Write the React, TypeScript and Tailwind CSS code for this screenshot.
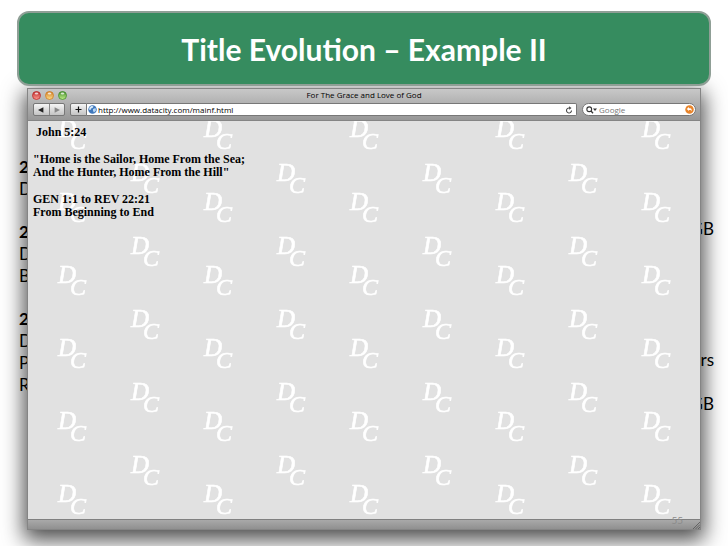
import React from "react";

const leftNotes = [
    ["2", "D"],
    ["2", "D", "B"],
    ["2", "D", "P", "R"],
];

const TrafficLight = ({ id, label, light, dark }: { id: string; label: string; light: string; dark: string }) => (
    <button type="button" aria-label={label} className="block size-[9px]">
        <svg viewBox="0 0 18 18" className="size-full">
            <defs>
                <linearGradient id={id} x1="0" y1="0" x2="0" y2="1">
                    <stop offset="0" stopColor={dark} />
                    <stop offset="1" stopColor={light} />
                </linearGradient>
            </defs>
            <circle cx="9" cy="9" r="8" fill={`url(#${id})`} stroke={dark} strokeWidth="1.6" />
            <ellipse cx="9" cy="5" rx="3.6" ry="2.2" fill="#fff" opacity="0.75" />
        </svg>
    </button>
);

const GlobeIcon = () => (
    <svg viewBox="0 0 18 18" className="size-[9px] shrink-0">
        <circle cx="9" cy="9" r="8.5" fill="#3f78bd" />
        <path d="M3 5 C5 2 9 1 11 3 L9 6 L6 7 L5 10 L2 9 Z" fill="#d8ebfa" />
        <path d="M10 8 L15 6 L16 11 L12 15 L10 12 Z" fill="#b7d6f2" />
    </svg>
);

const Toolbar = () => (
    <div className="mt-[2px] flex h-[13px] items-stretch pl-[5px] pr-1">
        <div className="flex w-8 rounded-[2px] border border-[#777] bg-linear-to-b from-[#f6f6f6] to-[#c3c3c3]">
            <button type="button" aria-label="Back" className="flex flex-1 items-center justify-center border-r border-[#888]">
                <svg viewBox="0 0 10 10" className="size-[6px]"><path d="M0 5 L9 0.5 V9.5 Z" fill="#222" /></svg>
            </button>
            <button type="button" aria-label="Forward" className="flex flex-1 items-center justify-center">
                <svg viewBox="0 0 10 10" className="size-[6px]"><path d="M10 5 L1 0.5 V9.5 Z" fill="#888" /></svg>
            </button>
        </div>

        <button type="button" aria-label="Add bookmark" className="ml-[5px] flex w-[17px] items-center justify-center rounded-l-[2px] border border-[#777] bg-linear-to-b from-[#f6f6f6] to-[#c3c3c3]">
            <svg viewBox="0 0 14 14" className="size-[7px]"><path d="M7 1 V13 M1 7 H13" stroke="#111" strokeWidth="2.4" /></svg>
        </button>
        <div className="flex min-w-0 flex-1 items-center gap-px rounded-r-[2px] border border-l-0 border-[#777] bg-white px-px">
            <GlobeIcon />
            <input aria-label="Address" defaultValue="http://www.datacity.com/mainf.html" className="h-full min-w-0 flex-1 text-[8px] leading-[10px] text-black outline-none" />
            <button type="button" aria-label="Reload" className="mr-[2px]">
                <svg viewBox="0 0 16 16" className="size-[8px]" fill="none" stroke="#444" strokeWidth="2.2">
                    <path d="M13 9 A5 5 0 1 1 9 4" />
                    <path d="M8 0.5 L13 4 L8.5 7.5 Z" fill="#444" stroke="none" />
                </svg>
            </button>
        </div>

        <div className="ml-[5px] flex w-[114px] items-center rounded-full border border-[#777] bg-white pl-[3px] pr-px">
            <svg viewBox="0 0 22 16" className="h-[8px] w-[11px] shrink-0">
                <circle cx="6.5" cy="6.5" r="4.8" fill="none" stroke="#333" strokeWidth="2.2" />
                <path d="M10 10 L14 14.5" stroke="#333" strokeWidth="2.6" />
                <path d="M14 5 H22 L18 10 Z" fill="#333" />
            </svg>
            <input aria-label="Search" placeholder="Google" className="ml-[2px] h-full min-w-0 flex-1 text-[8px] leading-[10px] outline-none placeholder:text-[#777]" />
            <button type="button" aria-label="Snap back">
                <svg viewBox="0 0 18 18" className="size-[9px]">
                    <circle cx="9" cy="9" r="8.5" fill="#e8842a" />
                    <path d="M3.5 8 L8 4 V6.5 H10 C13 6.5 14 9 13 13 C12.5 10.5 11.5 9.8 10 9.8 H8 V12 Z" fill="#fff" />
                </svg>
            </button>
        </div>
    </div>
);

// repeating DC monogram behind the page text
const Monograms = () => (
    <svg aria-hidden="true" className="absolute inset-0 size-full">
        <defs>
            <pattern id="monogram" y="34" width="146" height="73" patternUnits="userSpaceOnUse">
                <g fill="#fff" stroke="#fff" strokeWidth="0.6" fontFamily="'Liberation Serif', serif" fontStyle="italic" fontSize="25">
                    <text x="103" y="26">D</text>
                    <text x="115" y="38" fontSize="24">C</text>
                    <text x="30" y="55">D</text>
                    <text x="42" y="67" fontSize="24">C</text>
                </g>
            </pattern>
        </defs>
        <rect width="100%" height="100%" fill="url(#monogram)" />
    </svg>
);

const BrowserWindow = () => (
    <div className="absolute inset-x-[27px] bottom-4 top-[88px] flex flex-col border border-[#858585] bg-[#e1e1e1] font-['Open_Sans',sans-serif] shadow-[0_7px_20px_3px_rgba(0,0,0,0.7)]">
        <header className="h-8 shrink-0 border-b border-[#858585] bg-linear-to-b from-[#c8c8c8] to-[#979797]">
            <div className="grid h-3 grid-cols-[1fr_auto_1fr] items-center">
                <div className="flex gap-1 pl-1">
                    <TrafficLight id="close" label="Close" light="#ff9c91" dark="#b9282a" />
                    <TrafficLight id="minimise" label="Minimise" light="#ffe08a" dark="#cf7c25" />
                    <TrafficLight id="zoom" label="Zoom" light="#c3f08a" dark="#438c2b" />
                </div>
                <h2 className="text-[8px] leading-[10px] text-black">For The Grace and Love of God</h2>
            </div>
            <Toolbar />
        </header>

        <main className="relative min-h-0 flex-1">
            <Monograms />
            <div className="relative flex flex-col gap-[14px] pl-[5px] pt-[5px] font-['Liberation_Serif',serif] text-[12px] font-bold leading-[13px] text-black">
                <p className="pl-[3px]">John 5:24</p>
                <p>"Home is the Sailor, Home From the Sea;<br />And the Hunter, Home From the Hill"</p>
                <p>GEN 1:1 to REV 22:21<br />From Beginning to End</p>
            </div>
        </main>

        <footer className="flex h-[10px] shrink-0 items-end justify-end border-t border-[#808080] bg-linear-to-b from-[#a9a9a9] to-[#909090]">
            <svg viewBox="0 0 8 8" className="size-2" stroke="#555" strokeWidth="0.8"><path d="M1 8 L8 1 M3.5 8 L8 3.5 M6 8 L8 6" /></svg>
        </footer>
    </div>
);

const App = () => {
    return (
        <div className="relative flex min-h-screen flex-col overflow-hidden bg-white font-['Lato',sans-serif] text-black">
            <div className="relative z-10 mx-[17px] mt-[11px] flex h-[75px] items-center justify-center rounded-xl border-2 border-[#8f9f96] bg-[#368c5f]">
                <h1 className="text-[30px] font-bold leading-8 text-white">Title Evolution – Example II</h1>
            </div>

            <div className="flex justify-between px-[14px] pt-[70px] text-[17px] leading-[22px]">
                <div className="flex flex-col gap-[21px] pl-[5px]">
                    {leftNotes.map((lines, i) => (
                        <div key={i}>
                            {lines.map((line, j) => (
                                <p key={j} className={j === 0 ? "font-bold" : ""}>{line}</p>
                            ))}
                        </div>
                    ))}
                </div>
                <div className="flex flex-col pt-[62px] text-right">
                    <p>GB</p>
                    <p className="pt-[109px]">rs</p>
                    <p className="pt-[22px]">GB</p>
                </div>
            </div>

            <BrowserWindow />
            <p className="absolute bottom-5 right-[45px] text-[10px] leading-3 text-[#8b8b8b]">55</p>
        </div>
    );
};

export default App;
